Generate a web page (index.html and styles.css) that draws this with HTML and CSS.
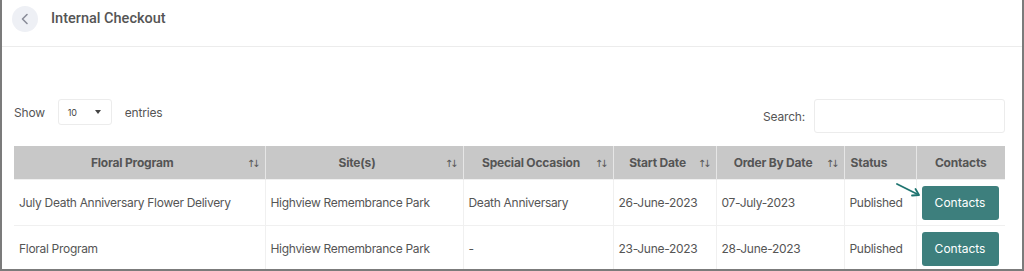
FILE: index.html
```html
<!DOCTYPE html>
<html>
<head>
<meta charset="utf-8">
<link rel="stylesheet" href="styles.css">
</head>
<body>
<div class="frame">
  <div class="topbar">
    <span class="back"><svg width="10" height="12" viewBox="0 0 10 12"><path d="M7 1.5 L2.5 6 L7 10.5" fill="none" stroke="#8a8d99" stroke-width="1.6" stroke-linecap="round" stroke-linejoin="round"/></svg></span>
    <span class="title">Internal Checkout</span>
  </div>
  <div class="content">
    <div class="controls">
      <div class="length">
        <span>Show</span>
        <span class="select"><span class="val">10</span><span class="caret"></span></span>
        <span>entries</span>
      </div>
      <div class="search">
        <span>Search:</span>
        <span class="input"></span>
      </div>
    </div>
    <table class="grid">
      <colgroup>
        <col class="c1"><col class="c2"><col class="c3"><col class="c4"><col class="c5"><col class="c6"><col class="c7">
      </colgroup>
      <thead>
        <tr>
          <th class="sort">Floral Program<span class="arr">↑↓</span></th>
          <th class="sort">Site(s)<span class="arr">↑↓</span></th>
          <th class="sort">Special Occasion<span class="arr">↑↓</span></th>
          <th class="sort">Start Date<span class="arr">↑↓</span></th>
          <th class="sort">Order By Date<span class="arr">↑↓</span></th>
          <th class="left">Status</th>
          <th>Contacts</th>
        </tr>
      </thead>
      <tbody>
        <tr>
          <td>July Death Anniversary Flower Delivery</td>
          <td>Highview Remembrance Park</td>
          <td>Death Anniversary</td>
          <td>26-June-2023</td>
          <td>07-July-2023</td>
          <td>Published</td>
          <td class="btncell"><span class="pointer"><svg width="26" height="14" viewBox="0 0 26 14"><path d="M1 1 L21 11" stroke="#1f7470" stroke-width="1.8" stroke-linecap="round"/><path d="M16 12.5 L23 12 L19.5 6" fill="none" stroke="#1f7470" stroke-width="1.8" stroke-linecap="round" stroke-linejoin="round"/></svg></span><span class="btn">Contacts</span></td>
        </tr>
        <tr>
          <td>Floral Program</td>
          <td>Highview Remembrance Park</td>
          <td>-</td>
          <td>23-June-2023</td>
          <td>28-June-2023</td>
          <td>Published</td>
          <td class="btncell"><span class="btn">Contacts</span></td>
        </tr>
      </tbody>
    </table>
  </div>
</div>
</body>
</html>
```

FILE: styles.css
```css
html, body {
  margin: 0;
  padding: 0;
  background: #fff;
}
body {
  font-family: "Inter", "Liberation Sans", sans-serif;
  color: #555;
}
.frame {
  width: 1024px;
  height: 271px;
  box-sizing: border-box;
  border-left: 2px solid #7b7b7b;
  border-right: 2px solid #7b7b7b;
  border-bottom: 2px solid #7b7b7b;
  overflow: hidden;
}
.topbar {
  border-bottom: 1px solid #ececec;
  display: flex;
  align-items: center;
  padding-left: 10px;
  padding-bottom: 9px;
  box-sizing: content-box;
  height: 37px;
}
.back {
  width: 26px;
  height: 26px;
  border-radius: 50%;
  background: #eef0f5;
  display: flex;
  align-items: center;
  justify-content: center;
}
.title {
  margin-left: 13px;
  font-family: "Roboto", sans-serif;
  font-weight: 500;
  font-size: 14.5px;
  color: #555;
}
.content {
  padding: 52px 17px 0 12px;
}
.controls {
  display: flex;
  justify-content: space-between;
  align-items: flex-start;
  height: 34px;
  margin-bottom: 13px;
}
.length {
  display: flex;
  align-items: center;
  font-size: 12px;
  letter-spacing: -0.2px;
  height: 26px;
  color: #555;
}
.select {
  width: 54px;
  height: 26px;
  box-sizing: border-box;
  border: 1px solid #ececec;
  border-radius: 3px;
  margin: 0 13px 0 13px;
  display: flex;
  align-items: center;
  padding-left: 9px;
  padding-right: 10px;
  justify-content: space-between;
}
.val {
  font-size: 9px;
  color: #444;
}
.caret {
  width: 0;
  height: 0;
  border-left: 3.5px solid transparent;
  border-right: 3.5px solid transparent;
  border-top: 4px solid #444;
}
.search {
  display: flex;
  align-items: center;
  font-size: 12px;
  letter-spacing: -0.2px;
}
.input {
  width: 191px;
  height: 34px;
  box-sizing: border-box;
  border: 1px solid #ececec;
  border-radius: 3px;
  margin-left: 9px;
}
.grid {
  width: 991px;
  border-collapse: collapse;
  table-layout: fixed;
}
.c1 { width: 251px; }
.c2 { width: 198px; }
.c3 { width: 150px; }
.c4 { width: 103px; }
.c5 { width: 128px; }
.c6 { width: 72px; }
.c7 { width: 89px; }
th {
  background: #c8c8c8;
  height: 33px;
  padding: 0 6px;
  font-size: 12px;
  letter-spacing: -0.2px;
  font-weight: 700;
  color: #555;
  text-align: center;
  border-left: 1px solid #e6e6e6;
  position: relative;
}
th:first-child { border-left: none; }
th.sort { padding-right: 20px; }
th.left { text-align: left; }
.arr {
  position: absolute;
  right: 7px;
  top: 50%;
  transform: translateY(-50%);
  font-family: "DejaVu Sans", sans-serif;
  font-size: 10px;
  font-weight: 400;
  color: #555;
  letter-spacing: -3px;
}
td {
  height: 45px;
  padding: 0 5px;
  font-size: 12px;
  letter-spacing: -0.3px;
  color: #555;
  border-left: 1px solid #f0f0f0;
  border-top: 1px solid #f0f0f0;
  white-space: nowrap;
}
td:first-child { border-left: none; }
.btncell {
  padding: 0 5px;
  position: relative;
}
.btn {
  display: flex;
  align-items: center;
  justify-content: center;
  width: 77px;
  height: 34px;
  background: #3d7f7d;
  color: #fff;
  border-radius: 3px;
  font-size: 12px;
  letter-spacing: 0;
}
.pointer {
  position: absolute;
  left: -21px;
  top: 3px;
  line-height: 0;
}
```
